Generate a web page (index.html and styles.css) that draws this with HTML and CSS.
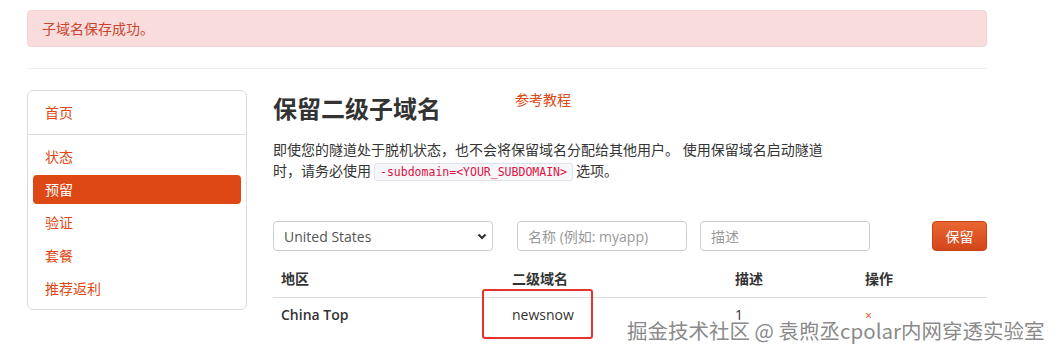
FILE: index.html
```html
<!DOCTYPE html>
<html lang="zh-CN">
<head>
<meta charset="utf-8">
<title>保留二级子域名</title>
<link rel="stylesheet" href="styles.css">
</head>
<body>
<div class="page">
  <div class="alert">子域名保存成功。</div>
  <hr class="rule">
  <div class="layout">
    <aside class="sidenav">
      <div class="nav-top"><a href="#" class="nav-link">首页</a></div>
      <ul class="nav-list">
        <li><a href="#" class="nav-link">状态</a></li>
        <li><a href="#" class="nav-link active">预留</a></li>
        <li><a href="#" class="nav-link">验证</a></li>
        <li><a href="#" class="nav-link">套餐</a></li>
        <li><a href="#" class="nav-link">推荐返利</a></li>
      </ul>
    </aside>
    <main class="content">
      <div class="title-row">
        <h1 class="title">保留二级子域名</h1>
        <a href="#" class="tutorial">参考教程</a>
      </div>
      <p class="intro">即使您的隧道处于脱机状态，也不会将保留域名分配给其他用户。 使用保留域名启动隧道时，请务必使用<code class="code">-subdomain=&lt;YOUR_SUBDOMAIN&gt;</code>选项。</p>
      <form class="reserve-form">
        <div class="select-wrap">
          <select class="control select">
            <option>United States</option>
            <option>China Top</option>
          </select>
          <svg class="chevron" width="10" height="7" viewBox="0 0 10 7"><path d="M1.5 1.5 L5 5 L8.5 1.5" fill="none" stroke="#333" stroke-width="2.2"/></svg>
        </div>
        <input class="control input-name" type="text" placeholder="名称 (例如: myapp)">
        <input class="control input-desc" type="text" placeholder="描述">
        <button type="button" class="btn">保留</button>
      </form>
      <div class="table-wrap">
        <table class="table">
          <colgroup>
            <col class="c1"><col class="c2"><col class="c3"><col class="c4">
          </colgroup>
          <thead>
            <tr><th>地区</th><th>二级域名</th><th>描述</th><th>操作</th></tr>
          </thead>
          <tbody>
            <tr><td class="region">China Top</td><td>newsnow</td><td class="num">1</td><td><a href="#" class="remove">×</a></td></tr>
          </tbody>
        </table>
        <div class="highlight"></div>
      </div>
    </main>
  </div>
  <div class="watermark">掘金技术社区 @ 袁煦丞cpolar内网穿透实验室</div>
</div>
</body>
</html>
```

FILE: styles.css
```css
html, body {
  margin: 0;
  padding: 0;
  background: #fff;
  overflow: hidden;
}
body {
  font-family: "Open Sans", "Noto Sans CJK SC", sans-serif;
  font-size: 14px;
  color: #333;
}
.page {
  position: relative;
  width: 1055px;
  height: 354px;
  padding: 10px 0 0 27px;
  box-sizing: border-box;
}
.alert {
  width: 960px;
  height: 37px;
  box-sizing: border-box;
  display: flex;
  align-items: center;
  padding: 0 14px;
  background: #f9dddd;
  border: 1px solid #f4d3d3;
  border-radius: 4px;
  color: #c8452f;
  font-size: 14px;
  line-height: 20px;
}
.rule {
  width: 960px;
  margin: 21px 0 0;
  border: 0;
  border-top: 1px solid #eee;
  height: 0;
}
.layout {
  display: flex;
  align-items: flex-start;
  margin-top: 21px;
}
.sidenav {
  width: 220px;
  box-sizing: border-box;
  border: 1px solid #ddd;
  border-radius: 6px;
  background: #fff;
}
.nav-top {
  height: 43px;
  display: flex;
  align-items: center;
  padding: 0 17px;
  border-bottom: 1px solid #ddd;
}
.nav-link {
  color: #dd4814;
  text-decoration: none;
  font-size: 14px;
  line-height: 20px;
}
.nav-list {
  list-style: none;
  margin: 0;
  padding: 7px 5px 6px;
  display: flex;
  flex-direction: column;
  gap: 4px;
}
.nav-list .nav-link {
  display: flex;
  align-items: center;
  height: 29px;
  padding: 0 12px;
  border-radius: 4px;
}
.nav-list .nav-link.active {
  background: #dd4814;
  color: #fff;
}
.content {
  width: 714px;
  margin-left: 26px;
}
.title-row {
  display: flex;
  align-items: flex-start;
}
.title {
  margin: 0;
  font-size: 24px;
  line-height: 38px;
  font-weight: bold;
  color: #333;
}
.tutorial {
  margin-left: 74px;
  color: #dd4814;
  text-decoration: none;
  font-size: 14px;
  line-height: 20px;
}
.intro {
  margin: 11px 0 0;
  max-width: 560px;
  line-height: 21px;
  font-size: 14px;
  color: #333;
}
.code {
  font-family: "DejaVu Sans Mono", "Liberation Mono", monospace;
  font-size: 11.5px;
  line-height: 14px;
  color: #d14;
  background: #f7f7f9;
  border: 1px solid #e1e1e8;
  border-radius: 3px;
  padding: 1px 5px;
  margin: 0 3px;
}
.reserve-form {
  display: flex;
  align-items: center;
  margin-top: 40px;
  height: 30px;
}
.control {
  height: 30px;
  box-sizing: border-box;
  border: 1px solid #ccc;
  border-radius: 4px;
  font-family: "Open Sans", "Noto Sans CJK SC", sans-serif;
  font-size: 14px;
  color: #555;
  background: #fff;
  padding: 0 10px;
}
.control::placeholder {
  color: #999;
}
.select-wrap {
  position: relative;
  width: 220px;
  height: 30px;
}
.select {
  width: 220px;
  appearance: none;
  -webkit-appearance: none;
  padding-left: 10px;
  color: #555;
}
.chevron {
  position: absolute;
  right: 6px;
  top: 12px;
}
.input-name {
  width: 170px;
  margin-left: 24px;
}
.input-desc {
  width: 170px;
  margin-left: 13px;
}
.btn {
  margin-left: auto;
  width: 55px;
  height: 30px;
  border: 1px solid #c9400f;
  border-radius: 4px;
  background: linear-gradient(#ea6632, #d3461a);
  color: #fff;
  font-family: "Open Sans", "Noto Sans CJK SC", sans-serif;
  font-size: 14px;
  padding: 0;
}
.table-wrap {
  position: relative;
  margin-top: 10px;
}
.table {
  width: 714px;
  border-collapse: collapse;
  table-layout: fixed;
}
.c1 { width: 231px; }
.c2 { width: 223px; }
.c3 { width: 130px; }
.c4 { width: 130px; }
.table th, .table td {
  text-align: left;
  padding: 0 8px;
  height: 36px;
  line-height: 20px;
  font-size: 14px;
  color: #333;
  box-sizing: border-box;
}
.table th {
  font-weight: bold;
  border-bottom: 1px solid #ddd;
}
.table td.region {
  font-weight: 600;
}
.table td.num {
  vertical-align: top;
  padding-top: 7px;
}
.remove {
  color: #dd4814;
  text-decoration: none;
  font-size: 12px;
}
.highlight {
  position: absolute;
  left: 209px;
  top: 28px;
  width: 111px;
  height: 50px;
  box-sizing: border-box;
  border: 2px solid #e8322c;
  border-radius: 3px;
}
.watermark {
  position: absolute;
  left: 627px;
  top: 317px;
  font-size: 20.5px;
  line-height: 26px;
  color: #8a8a8a;
  white-space: nowrap;
  text-shadow: 0 0 2px #fff, 0 0 2px #fff;
  font-family: "Noto Sans CJK SC", sans-serif;
}
```
